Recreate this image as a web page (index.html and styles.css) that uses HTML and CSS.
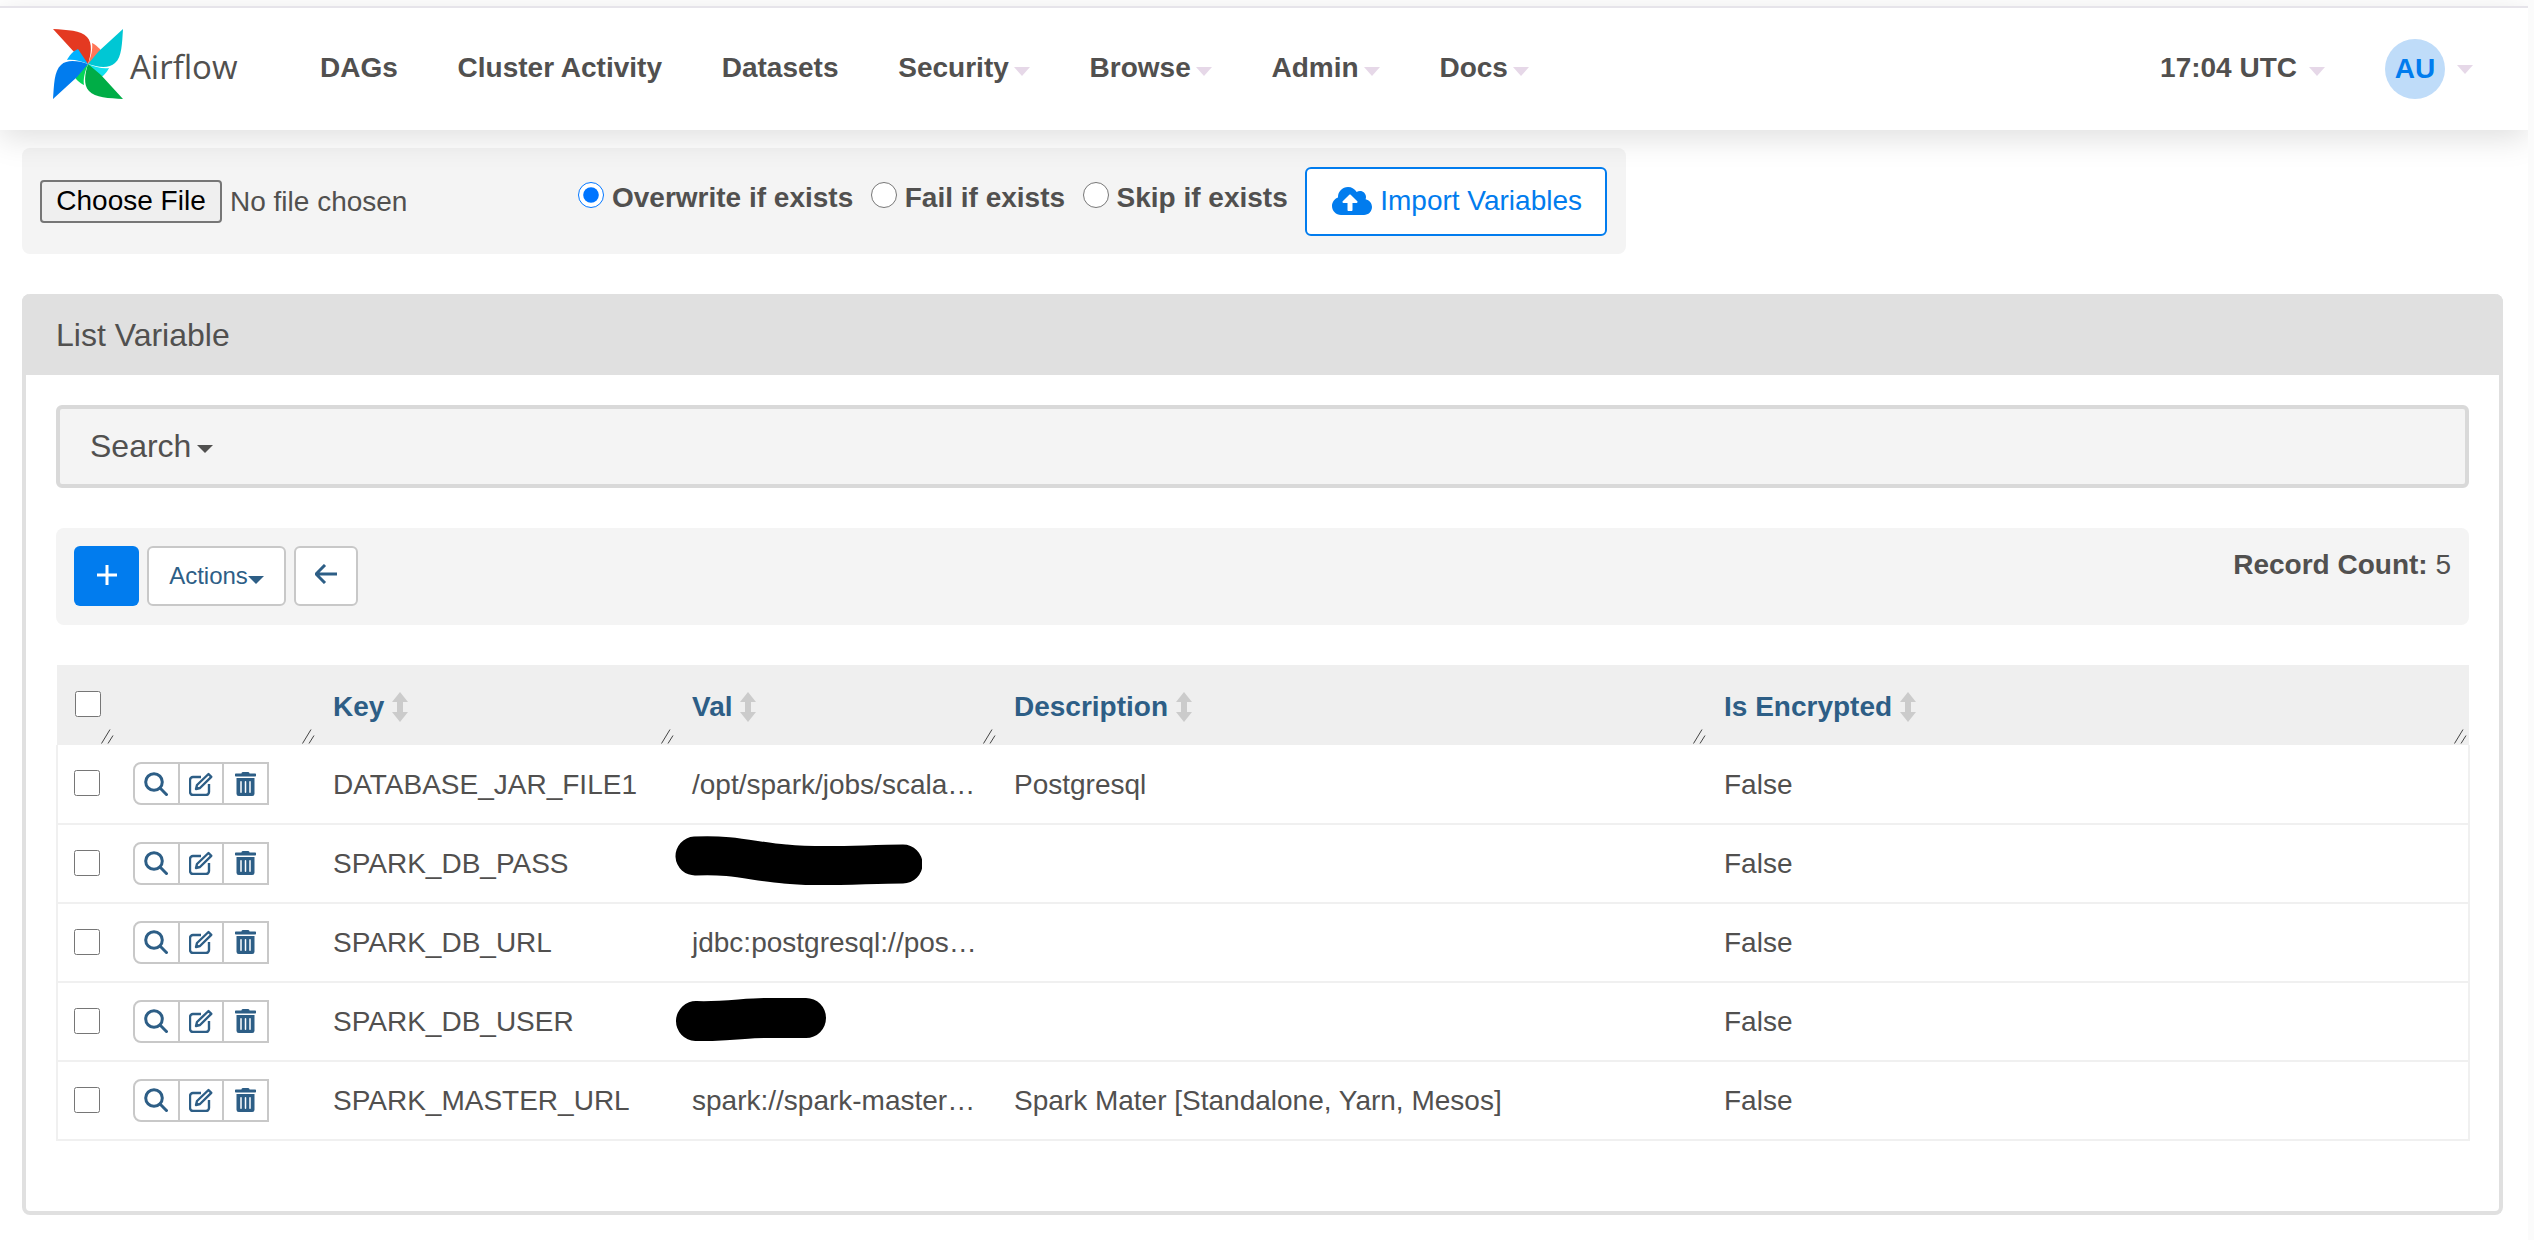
FILE: index.html
```html
<!DOCTYPE html>
<html lang="en">
<head>
  <meta charset="UTF-8" />
  <title>List Variable - Airflow</title>
  <link rel="stylesheet" href="styles.css">
</head>
<body>
  <svg class="sprites" aria-hidden="true">
    <symbol id="i-search" viewBox="0 0 24 24">
      <circle cx="10" cy="10" r="8.3" fill="none" stroke="currentColor" stroke-width="3" />
      <path d="M16 16l7.5 7.5" fill="none" stroke="currentColor" stroke-width="3" />
    </symbol>
    <symbol id="i-edit" viewBox="0 0 24 24">
      <path d="M12 5H4a3 3 0 0 0-3 3v12a3 3 0 0 0 3 3h13a3 3 0 0 0 3-3v-8" fill="none" stroke="currentColor" stroke-width="2.4" />
      <path d="M19.5 2l2.8 2.8L11 16l-4 1 1-4z" fill="none" stroke="currentColor" stroke-width="2.4" stroke-linejoin="round" />
    </symbol>
    <symbol id="i-trash" viewBox="0 0 448 512">
      <path d="M32 464a48 48 0 0 0 48 48h288a48 48 0 0 0 48-48V128H32zm272-256a16 16 0 0 1 32 0v224a16 16 0 0 1-32 0zm-96 0a16 16 0 0 1 32 0v224a16 16 0 0 1-32 0zm-96 0a16 16 0 0 1 32 0v224a16 16 0 0 1-32 0zM432 32H312l-9.4-18.7A24 24 0 0 0 281.1 0H166.8a23.72 23.72 0 0 0-21.4 13.3L136 32H16A16 16 0 0 0 0 48v32a16 16 0 0 0 16 16h416a16 16 0 0 0 16-16V48a16 16 0 0 0-16-16z" fill="currentColor" />
    </symbol>
    <symbol id="i-sort" viewBox="0 0 16 30">
      <path d="M8 0l8 10h-5v10h5l-8 10-8-10h5V10H0z" fill="currentColor" />
    </symbol>
    <symbol id="i-grip" viewBox="0 0 14 15">
      <path d="M0.5 14.5L9 0.5M7 14.5l5-8" fill="none" stroke="#444" stroke-width="1" />
    </symbol>
  </svg>

  <nav class="navbar">
    <a class="brand" href="#">
      <svg class="logo" viewBox="0 0 70 71">
        <g>
          <path d="M0 0C14 1 28 1 34 8C40 14 38 26 35 35L22 24Z" fill="#e43921" />
          <path d="M39 14C43 16 48 20 50 25L35 35C38 28 40 20 39 14Z" fill="#ff7557" />
        </g>
        <g transform="rotate(90 35 35)">
          <path d="M0 0C14 1 28 1 34 8C40 14 38 26 35 35L22 24Z" fill="#00c7d4" />
          <path d="M39 14C43 16 48 20 50 25L35 35C38 28 40 20 39 14Z" fill="#11e1ee" />
        </g>
        <g transform="rotate(180 35 35)">
          <path d="M0 0C14 1 28 1 34 8C40 14 38 26 35 35L22 24Z" fill="#00ad46" />
          <path d="M39 14C43 16 48 20 50 25L35 35C38 28 40 20 39 14Z" fill="#04d659" />
        </g>
        <g transform="rotate(270 35 35)">
          <path d="M0 0C14 1 28 1 34 8C40 14 38 26 35 35L22 24Z" fill="#017cee" />
          <path d="M39 14C43 16 48 20 50 25L35 35C38 28 40 20 39 14Z" fill="#00b1ff" />
        </g>
      </svg>
      <span class="brand-name">Airflow</span>
    </a>
    <ul class="nav-links">
      <li>DAGs</li>
      <li>Cluster Activity</li>
      <li>Datasets</li>
      <li>Security<span class="caret"></span></li>
      <li>Browse<span class="caret"></span></li>
      <li>Admin<span class="caret"></span></li>
      <li>Docs<span class="caret"></span></li>
    </ul>
    <div class="nav-right">
      <span class="clock">17:04 UTC<span class="caret"></span></span>
      <span class="user"><span class="avatar">AU</span><span class="caret"></span></span>
    </div>
  </nav>

  <form class="file-bar">
    <input class="file-input" type="file" />
    <label class="radio"><input type="radio" name="action" checked />Overwrite if exists</label>
    <label class="radio"><input type="radio" name="action" />Fail if exists</label>
    <label class="radio"><input type="radio" name="action" />Skip if exists</label>
    <button class="btn-import" type="button">
      <svg class="cloud" viewBox="0 0 640 512"><path d="M537.6 226.6c4.1-10.7 6.4-22.4 6.4-34.6 0-53-43-96-96-96-19.7 0-38.1 6-53.3 16.2C367 64.2 315.3 32 256 32c-88.4 0-160 71.6-160 160 0 2.7.1 5.4.2 8.1C40.2 219.8 0 273.2 0 336c0 79.5 64.5 144 144 144h368c70.7 0 128-57.3 128-128 0-61.9-44-113.6-102.4-125.4zM393.4 288H328v112c0 8.8-7.2 16-16 16h-48c-8.8 0-16-7.2-16-16V288h-65.4c-14.3 0-21.4-17.2-11.3-27.3l105.4-105.4c6.2-6.2 16.4-6.2 22.6 0l105.4 105.4c10.1 10.1 2.9 27.3-11.3 27.3z" fill="currentColor" /></svg>
      Import Variables
    </button>
  </form>

  <section class="card">
    <h1 class="card-title">List Variable</h1>
    <div class="card-body">
      <div class="search-box">Search<span class="caret-dark"></span></div>

      <div class="toolbar">
        <div class="toolbar-btns">
          <button class="btn-add" type="button">
            <svg viewBox="0 0 20 20" width="20" height="20"><path d="M10 0v20M0 10h20" stroke="#fff" stroke-width="3" /></svg>
          </button>
          <button class="btn-plain btn-actions" type="button">Actions<span class="caret-dark"></span></button>
          <button class="btn-plain btn-back" type="button">
            <svg viewBox="0 0 22 20" width="22" height="20"><path d="M22 10H2M10 1l-9 9 9 9" fill="none" stroke="currentColor" stroke-width="3" /></svg>
          </button>
        </div>
        <div class="record-count"><strong>Record Count:</strong> 5</div>
      </div>

      <table class="list-table">
        <colgroup>
          <col class="col-check" /><col class="col-act" /><col class="col-key" />
          <col class="col-val" /><col class="col-desc" /><col class="col-enc" />
        </colgroup>
        <thead>
          <tr>
            <th><input type="checkbox" /><svg class="grip"><use href="#i-grip" /></svg></th>
            <th><svg class="grip"><use href="#i-grip" /></svg></th>
            <th>Key<svg class="sort"><use href="#i-sort" /></svg><svg class="grip"><use href="#i-grip" /></svg></th>
            <th>Val<svg class="sort"><use href="#i-sort" /></svg><svg class="grip"><use href="#i-grip" /></svg></th>
            <th>Description<svg class="sort"><use href="#i-sort" /></svg><svg class="grip"><use href="#i-grip" /></svg></th>
            <th>Is Encrypted<svg class="sort"><use href="#i-sort" /></svg><svg class="grip"><use href="#i-grip" /></svg></th>
          </tr>
        </thead>
        <tbody>
          <tr>
            <td><input type="checkbox" /></td>
            <td><div class="row-btns"><span><svg class="i-search"><use href="#i-search" /></svg></span><span><svg class="i-edit"><use href="#i-edit" /></svg></span><span><svg class="i-trash"><use href="#i-trash" /></svg></span></div></td>
            <td>DATABASE_JAR_FILE1</td>
            <td class="cut">/opt/spark/jobs/scala…</td>
            <td>Postgresql</td>
            <td>False</td>
          </tr>
          <tr>
            <td><input type="checkbox" /></td>
            <td><div class="row-btns"><span><svg class="i-search"><use href="#i-search" /></svg></span><span><svg class="i-edit"><use href="#i-edit" /></svg></span><span><svg class="i-trash"><use href="#i-trash" /></svg></span></div></td>
            <td>SPARK_DB_PASS</td>
            <td>
              <svg class="scribble scribble-long" viewBox="0 0 247 49"><path d="M20 20C60 18 80 26 110 28C150 32 190 28 228 28" fill="none" stroke="#000" stroke-width="39" stroke-linecap="round" /></svg>
            </td>
            <td></td>
            <td>False</td>
          </tr>
          <tr>
            <td><input type="checkbox" /></td>
            <td><div class="row-btns"><span><svg class="i-search"><use href="#i-search" /></svg></span><span><svg class="i-edit"><use href="#i-edit" /></svg></span><span><svg class="i-trash"><use href="#i-trash" /></svg></span></div></td>
            <td>SPARK_DB_URL</td>
            <td class="cut">jdbc:postgresql://pos…</td>
            <td></td>
            <td>False</td>
          </tr>
          <tr>
            <td><input type="checkbox" /></td>
            <td><div class="row-btns"><span><svg class="i-search"><use href="#i-search" /></svg></span><span><svg class="i-edit"><use href="#i-edit" /></svg></span><span><svg class="i-trash"><use href="#i-trash" /></svg></span></div></td>
            <td>SPARK_DB_USER</td>
            <td>
              <svg class="scribble scribble-short" viewBox="0 0 152 43"><path d="M21 23C50 24 70 20 90 20C110 20 120 20 131 20" fill="none" stroke="#000" stroke-width="40" stroke-linecap="round" /></svg>
            </td>
            <td></td>
            <td>False</td>
          </tr>
          <tr>
            <td><input type="checkbox" /></td>
            <td><div class="row-btns"><span><svg class="i-search"><use href="#i-search" /></svg></span><span><svg class="i-edit"><use href="#i-edit" /></svg></span><span><svg class="i-trash"><use href="#i-trash" /></svg></span></div></td>
            <td>SPARK_MASTER_URL</td>
            <td class="cut">spark://spark-master…</td>
            <td>Spark Mater [Standalone, Yarn, Mesos]</td>
            <td>False</td>
          </tr>
        </tbody>
      </table>
    </div>
  </section>
</body>
</html>
```

FILE: styles.css
```css
html {
  background: #fbfbfb;
  overflow: hidden;
}

body {
  margin: 0;
  width: 2528px;
  height: 1240px;
  background: white;
  font-family: "Liberation Sans", Arial, sans-serif;
  font-size: 28px;
  color: #51504f;
  overflow: hidden;
}

.sprites {
  display: none;
}

/* navbar */
.navbar {
  display: flex;
  align-items: center;
  height: 122px;
  margin-top: 6px;
  padding: 0 55px 0 53px;
  border-top: 2px solid #e6e4ea;
  background: white;
  box-shadow: 0 8px 30px rgba(0,0,0,0.13);
  position: relative;
}

.brand {
  display: flex;
  align-items: center;
  width: 267px;
  color: #51504f;
  text-decoration: none;
}

.logo {
  width: 70px;
  height: 71px;
  margin-top: -10px;
}

.brand-name {
  font-family: "Open Sans", sans-serif;
  font-size: 33px;
  margin-left: 7px;
  margin-top: -6px;
}

.nav-links {
  display: flex;
  gap: 59.8px;
  margin: -2px 0 0;
  padding: 0;
  list-style: none;
  font-weight: bold;
}

.caret {
  display: inline-block;
  margin-left: 5px;
  vertical-align: 1px;
  border-top: 9px solid #e6d8e8;
  border-left: 8px solid transparent;
  border-right: 8px solid transparent;
}

.nav-right {
  display: flex;
  align-items: center;
  margin-left: auto;
  font-weight: bold;
}

.clock {
  margin-top: -2px;
}

.clock .caret {
  margin-left: 12px;
}

.user {
  display: flex;
  align-items: center;
  margin-left: 60px;
}

.user .caret {
  margin-left: 12px;
}

.avatar {
  display: flex;
  justify-content: center;
  align-items: center;
  width: 60px;
  height: 60px;
  border-radius: 50%;
  background: #bfdcf9;
  color: #017cee;
}

/* import form */
.file-bar {
  display: flex;
  align-items: center;
  width: 1604px;
  height: 106px;
  box-sizing: border-box;
  margin: 18px 0 40px 22px;
  padding: 0 18px;
  background: #f4f4f4;
  border-radius: 8px;
}

.file-input {
  flex: none;
  width: 538px;
  font-family: inherit;
  font-size: 28px;
  color: #51504f;
}

.file-input::file-selector-button {
  height: 43px;
  width: 182px;
  margin-right: 8px;
  padding: 0;
  border: 2px solid #767676;
  border-radius: 4px;
  background: #efefef;
  font-size: 28px;
  color: black;
}

.radio {
  display: flex;
  flex: none;
  align-items: center;
  margin-right: 17.5px;
  margin-top: -6px;
  font-weight: bold;
  white-space: nowrap;
}

.radio input {
  width: 26px;
  height: 26px;
  margin: -6px 8px 0 0;
}

.btn-import {
  display: flex;
  flex: none;
  align-items: center;
  gap: 8px;
  width: 302px;
  height: 69px;
  padding: 0 0 0 25px;
  border: 2px solid #017cee;
  border-radius: 6px;
  background: white;
  font-family: inherit;
  font-size: 28px;
  color: #017cee;
}

.cloud {
  width: 40px;
  height: 32px;
}

/* card */
.card {
  width: 2481px;
  height: 921px;
  box-sizing: border-box;
  margin-left: 22px;
  border: 4px solid #e0e0e0;
  border-top: 0;
  border-radius: 8px;
}

.card-title {
  margin: 0 -4px;
  height: 81px;
  padding-left: 34px;
  background: #e0e0e0;
  border-radius: 8px 8px 0 0;
  font-size: 32px;
  font-weight: normal;
  line-height: 82px;
}

.card-body {
  padding: 30px 30px 0;
}

.search-box {
  display: flex;
  align-items: center;
  height: 83px;
  box-sizing: border-box;
  padding-left: 30px;
  border: 4px solid #d9d9d9;
  border-radius: 6px;
  background: #f4f4f4;
  font-size: 32px;
}

.caret-dark {
  display: inline-block;
  margin: 4px 0 0 6px;
  border-top: 8px solid currentColor;
  border-left: 8px solid transparent;
  border-right: 8px solid transparent;
}

.toolbar {
  display: flex;
  justify-content: space-between;
  height: 97px;
  box-sizing: border-box;
  margin-top: 40px;
  padding: 18px 18px 0 18px;
  background: #f4f4f4;
  border-radius: 8px;
}

.toolbar-btns {
  display: flex;
  gap: 8px;
  height: 60px;
}

.btn-add {
  width: 65px;
  border: 0;
  border-radius: 6px;
  background: #017cee;
}

.btn-plain {
  border: 2px solid #c8c8c8;
  border-radius: 6px;
  background: white;
  color: #2d5e86;
  font-family: inherit;
  font-size: 24px;
  padding: 0;
}

.btn-actions {
  width: 139px;
}

.btn-actions .caret-dark {
  margin-left: 0;
}

.btn-back {
  width: 64px;
}

.record-count {
  line-height: 38px;
}

/* table */
.list-table {
  width: 2412px;
  margin-top: 40px;
  table-layout: fixed;
  border-collapse: collapse;
}

.col-check { width: 59px; }
.col-act { width: 201px; }
.col-key { width: 359px; }
.col-val { width: 322px; }
.col-desc { width: 710px; }
.col-enc { width: 761px; }

.list-table th {
  position: relative;
  height: 80px;
  box-sizing: border-box;
  padding: 4px 16px 0;
  background: #efefef;
  color: #2d5e86;
  text-align: left;
}

.list-table td {
  height: 79px;
  box-sizing: border-box;
  padding: 1px 16px 0;
  border-bottom: 2px solid #f0f0f0;
}

.list-table td:first-child {
  border-left: 2px solid #f0f0f0;
}

.list-table td:last-child {
  border-right: 2px solid #f0f0f0;
}

.list-table input[type=checkbox] {
  display: block;
  width: 26px;
  height: 26px;
  margin: -3px 0 0 0;
}

.list-table th input[type=checkbox] {
  margin: -6px 0 0 2px;
}

.cut {
  white-space: nowrap;
}

.sort {
  width: 16px;
  height: 30px;
  margin-left: 8px;
  color: #cbcbcb;
  vertical-align: -6px;
}

.grip {
  position: absolute;
  right: 1px;
  bottom: 1px;
  width: 14px;
  height: 15px;
}

.row-btns {
  display: flex;
  width: 136px;
  height: 43px;
  box-sizing: border-box;
  margin: -2px 0 0 1px;
  border: 2px solid #c8c8c8;
  border-radius: 8px 0 0 8px;
  color: #2d5e86;
}

.row-btns span {
  display: flex;
  justify-content: center;
  align-items: center;
  flex: 1;
}

.row-btns span + span {
  border-left: 2px solid #c8c8c8;
}

.i-search, .i-edit {
  width: 24px;
  height: 24px;
}

.i-trash {
  width: 21px;
  height: 24px;
}

.scribble {
  display: block;
  margin-left: -17px;
}

.scribble-long {
  width: 247px;
  height: 49px;
  margin-top: -7px;
}

.scribble-short {
  width: 152px;
  height: 43px;
  margin-top: -6px;
}
```
